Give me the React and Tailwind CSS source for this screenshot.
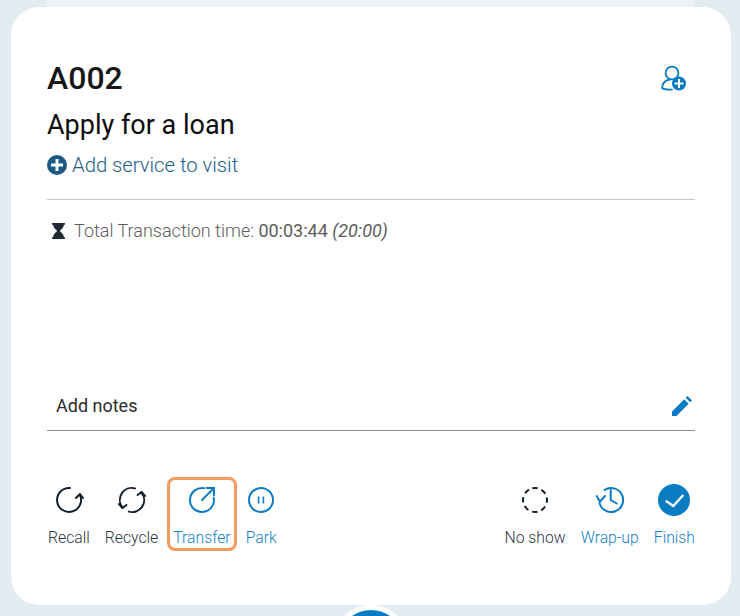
import React from 'react';

function RecallIcon() {
  return (
    <svg width="30" height="30" viewBox="0 0 30 30" fill="none" stroke="#12202c" strokeWidth="2" strokeLinecap="round" strokeLinejoin="round">
      <path d="M16 3A12 12 0 1 0 26 10" />
      <path d="M22 13l4-4 3 4" />
    </svg>
  );
}

function RecycleIcon() {
  return (
    <svg width="30" height="30" viewBox="0 0 30 30" fill="none" stroke="#12202c" strokeWidth="2" strokeLinecap="round" strokeLinejoin="round">
      <path d="M18 3.400A12 12 0 0 0 5.500 22.500" />
      <path d="M2 19l3.500 4 4-3" />
      <path d="M12 26.600A12 12 0 0 0 24.500 7.500" />
      <path d="M20.500 10l4-3 3.500 4" />
    </svg>
  );
}

function TransferIcon() {
  return (
    <svg width="30" height="30" viewBox="0 0 30 30" fill="none" stroke="#0a7cc4" strokeWidth="2" strokeLinecap="round">
      <path d="M17 3.200A12 12 0 1 0 26.800 13" />
      <path d="M15 15L27 3" />
      <path d="M19.500 3H27v7.500" />
    </svg>
  );
}

function ParkIcon() {
  return (
    <svg width="30" height="30" viewBox="0 0 30 30" fill="none" stroke="#0a7cc4">
      <circle cx="15" cy="15" r="12" strokeWidth="2" />
      <path d="M12.600 11.500v7M17.400 11.500v7" strokeWidth="1.600" />
    </svg>
  );
}

function NoShowIcon() {
  return (
    <svg width="30" height="30" viewBox="0 0 30 30" fill="none" stroke="#12202c" strokeWidth="2">
      <circle cx="15" cy="15" r="12" strokeDasharray="5.400 4.025" transform="rotate(-103 15 15)" />
    </svg>
  );
}

function WrapUpIcon() {
  return (
    <svg width="30" height="30" viewBox="0 0 30 30" fill="none" stroke="#0a7cc4" strokeWidth="2" strokeLinecap="round" strokeLinejoin="round">
      <path d="M9.500 5A12 12 0 1 1 4.500 18" />
      <path d="M1.700 11L5 16.700 10 11" />
      <path d="M15.700 5V15l6 3.500" />
    </svg>
  );
}

function FinishIcon() {
  return (
    <svg width="32" height="32" viewBox="0 0 32 32">
      <circle cx="16" cy="16" r="16" fill="#0a7cc4" />
      <path d="M7.700 16.700L15.300 22 25.300 11" fill="none" stroke="#fff" strokeWidth="2.400" />
    </svg>
  );
}

function Action({ icon, label, blue, boxed }) {
  return (
    <button
      className={`flex h-[74px] flex-col items-center rounded-lg ${boxed ? '-mx-[6px] border-[3px] border-[#f59b5f] px-[3px] pt-[5px]' : 'pt-[8px]'} ${blue ? 'text-[#1482c8]' : 'text-[#2b3640]'}`}
    >
      <span className="flex h-[30px] items-center justify-center">{icon}</span>
      <span className="mt-[13px] whitespace-nowrap text-[15.75px] leading-[20px] font-light">{label}</span>
    </button>
  );
}

export default function App() {
  return (
    <div className="relative h-[616px] w-[740px] overflow-hidden bg-[#e3ecf1] pt-[7px] pl-[11px] font-['Roboto',sans-serif]">
      {/* strip of the card behind */}
      <div className="absolute top-0 left-[47px] h-[7px] w-[648px] bg-[#ebf1f4]" />

      <div className="relative h-[598px] w-[720px] rounded-[28px] bg-white px-[36px] pt-[51px]">
        <div className="flex items-start justify-between">
          <h1 className="text-[32px] leading-[40px] font-medium text-[#171717]">A002</h1>
          <svg className="mt-[6px] mr-[7px]" width="28" height="28" viewBox="0 0 28 28" fill="none">
            <circle cx="12" cy="9" r="6.400" stroke="#0a7cc4" strokeWidth="1.800" />
            <path d="M10 15.500C5.500 16 2.500 19.500 2 24c2.500 2 6 1.500 10 1.600" stroke="#0a7cc4" strokeWidth="1.800" strokeLinecap="round" />
            <circle cx="19" cy="19.500" r="7" fill="#0a7cc4" />
            <path d="M19 15v9M14.500 19.500h9" stroke="#fff" strokeWidth="2" />
          </svg>
        </div>
        <p className="mt-[9px] text-[27px] leading-[36px] text-[#0c0c0c]">Apply for a loan</p>
        <div className="mt-[8px] flex items-center gap-[5px] text-[20.25px] leading-[28px] font-light text-[#1d6088]">
          <svg width="20" height="20" viewBox="0 0 20 20">
            <circle cx="10" cy="10" r="10" fill="#1a5a83" />
            <path d="M10 4v12M4 10h12" stroke="#fff" strokeWidth="3" />
          </svg>
          Add service to visit
        </div>
        <div className="mt-[20px] border-t border-[#c8c8c8]" />

        <div className="mt-[19px] flex items-center text-[18px] leading-[24px] font-light text-[#5d5d5d]">
          <svg className="mr-[9px] ml-[5px]" width="13" height="16" viewBox="0 0 14 18" preserveAspectRatio="none" fill="#1f2a36">
            <path d="M0 0h14v2h-1.200c0 3-2.500 5-4.400 7 1.900 2 4.400 4 4.400 7H14v2H0v-2h1.200c0-3 2.500-5 4.400-7C3.700 7 1.200 5 1.200 2H0z" />
          </svg>
          <span>Total Transaction time:&nbsp;</span>
          <span className="font-normal">00:03:44&nbsp;</span>
          <em className="font-normal">(20:00)</em>
        </div>

        <div className="mt-[138px] flex h-[50px] items-center justify-between border-b border-[#8e8e8e] pr-[3px] pl-[9px]">
          <span className="text-[18px] font-normal text-[#2c2c2c]">Add notes</span>
          <svg width="20" height="20" viewBox="0 0 20 20" fill="#0a7cc4">
            <path d="M0 20v-4.500L12.200 3.300l4.500 4.500L4.500 20zM13.700 1.800L15.500 0 20 4.500l-1.800 1.800z" />
          </svg>
        </div>

        <div className="mt-[46px] flex items-start justify-between pl-[1px]">
          <div className="flex gap-[15px]">
            <Action icon={<RecallIcon />} label="Recall" />
            <Action icon={<RecycleIcon />} label="Recycle" />
            <Action icon={<TransferIcon />} label="Transfer" blue boxed />
            <Action icon={<ParkIcon />} label="Park" blue />
          </div>
          <div className="flex gap-[15px]">
            <Action icon={<NoShowIcon />} label="No show" />
            <Action icon={<WrapUpIcon />} label="Wrap-up" blue />
            <Action icon={<FinishIcon />} label="Finish" blue />
          </div>
        </div>
      </div>

      {/* floating button peeking from below */}
      <div className="absolute top-[605px] left-[333px] h-[76px] w-[76px] rounded-full border-[5px] border-white bg-[#0a7cc4]" />
    </div>
  );
}
